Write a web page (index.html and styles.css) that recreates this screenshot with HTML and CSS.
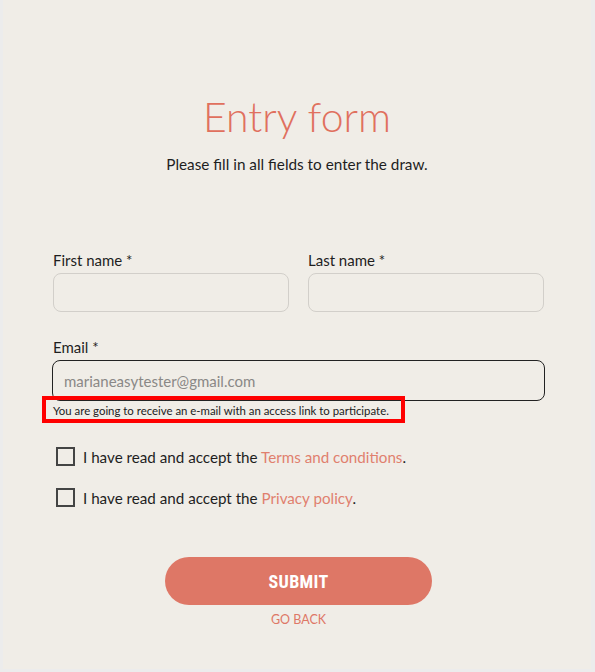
FILE: index.html
```html
<!DOCTYPE html>
<html>
<head>
<meta charset="utf-8">
<link rel="stylesheet" href="styles.css">
</head>
<body>
<div class="panel">
  <h1 class="title">Entry form</h1>
  <p class="subtitle">Please fill in all fields to enter the draw.</p>
  <form class="form">
    <div class="row">
      <div class="field">
        <label class="label">First name *</label>
        <div class="input"></div>
      </div>
      <div class="field">
        <label class="label">Last name *</label>
        <div class="input"></div>
      </div>
    </div>
    <div class="field email-field">
      <label class="label">Email *</label>
      <div class="input input-active"><span class="placeholder">marianeasytester@gmail.com</span></div>
      <div class="hint-wrap">
        <span class="hint">You are going to receive an e-mail with an access link to participate.</span>
        <span class="highlight"></span>
      </div>
    </div>
    <div class="checks">
      <div class="check"><span class="box"></span><span>I have read and accept the <a class="link">Terms and conditions</a>.</span></div>
      <div class="check"><span class="box"></span><span>I have read and accept the <a class="link">Privacy policy</a>.</span></div>
    </div>
    <div class="actions">
      <button type="button" class="submit">SUBMIT</button>
      <a class="back">GO BACK</a>
    </div>
  </form>
</div>
</body>
</html>
```
FILE: styles.css
```css
html, body { margin: 0; padding: 0; }
body {
  background: #ececec;
  font-family: Lato, "Open Sans", sans-serif;
  color: #1e1e1e;
  width: 595px;
  height: 672px;
  overflow: hidden;
}
.panel {
  background: #f0ede7;
  margin-left: 3px;
  width: 588px;
  height: 669px;
  box-sizing: border-box;
  padding-top: 91px;
}
.title {
  margin: 0;
  text-align: center;
  font-weight: 300;
  font-size: 41px;
  line-height: 52px;
  color: #e0705e;
}
.subtitle {
  margin: 11px 0 0;
  text-align: center;
  font-size: 15.3px;
  line-height: 20px;
}
.form {
  margin: 76px 0 0 50px;
  width: 491px;
}
.row {
  display: flex;
  gap: 19px;
}
.row .field { flex: 1; }
.label {
  display: block;
  font-size: 15px;
  line-height: 20px;
  margin-bottom: 3px;
}
.input {
  height: 37px;
  border: 1px solid #d2cfca;
  border-radius: 8px;
  box-sizing: content-box;
  display: flex;
  align-items: center;
}
.email-field { margin-top: 25px; }
.input-active {
  border-color: #222;
  height: 39px;
  margin-left: -1px;
  margin-right: -1px;
}
.placeholder {
  padding-left: 11px;
  font-size: 15px;
  color: #8a8886;
}
.hint-wrap {
  position: relative;
  margin-top: 3px;
}
.hint {
  font-size: 11.4px;
  line-height: 14px;
  color: #222;
  display: block;
}
.highlight {
  position: absolute;
  left: -11px;
  top: -8px;
  width: 355px;
  height: 19px;
  border: 4px solid #ff0000;
}
.checks {
  margin-top: 29px;
  display: flex;
  flex-direction: column;
  gap: 22px;
}
.check {
  display: flex;
  align-items: center;
  gap: 8px;
  padding-left: 3px;
  font-size: 15.2px;
  line-height: 18px;
}
.box {
  width: 15px;
  height: 15px;
  border: 2px solid #444;
  flex: none;
}
.link { color: #e0806e; }
.actions {
  margin-top: 50px;
  display: flex;
  flex-direction: column;
  align-items: center;
}
.submit {
  width: 267px;
  height: 48px;
  border: none;
  border-radius: 24px;
  background: #de7766;
  color: #fff;
  font-family: "Roboto Condensed", "Liberation Sans Narrow", Roboto, sans-serif;
  font-weight: 700;
  font-size: 18px;
  letter-spacing: 0.3px;
}
.back {
  margin-top: 7px;
  font-size: 12.5px;
  color: #de7766;
}
```
